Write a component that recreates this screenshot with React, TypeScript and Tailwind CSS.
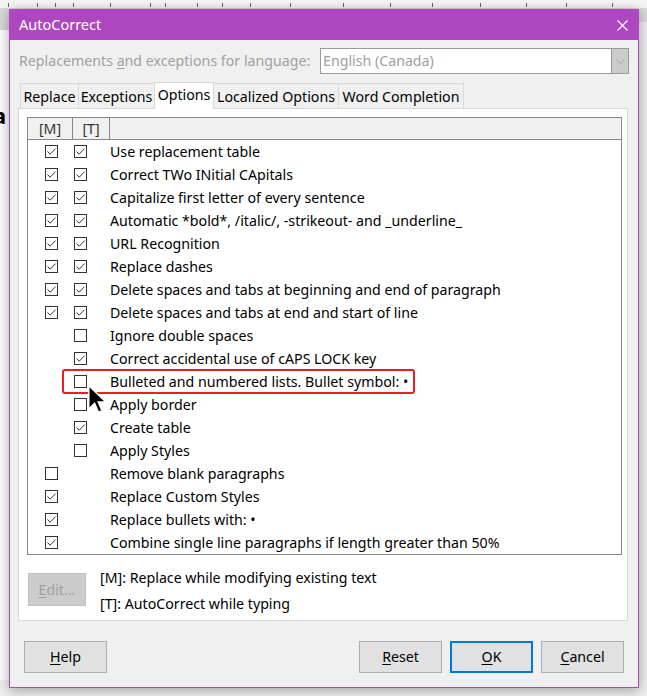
import React from "react";

type C = "c" | "u" | null;

const rows: [string, C, C][] = [
  ["Use replacement table", "c", "c"],
  ["Correct TWo INitial CApitals", "c", "c"],
  ["Capitalize first letter of every sentence", "c", "c"],
  ["Automatic *bold*, /italic/, -strikeout- and _underline_", "c", "c"],
  ["URL Recognition", "c", "c"],
  ["Replace dashes", "c", "c"],
  ["Delete spaces and tabs at beginning and end of paragraph", "c", "c"],
  ["Delete spaces and tabs at end and start of line", "c", "c"],
  ["Ignore double spaces", null, "u"],
  ["Correct accidental use of cAPS LOCK key", null, "c"],
  ["Bulleted and numbered lists. Bullet symbol: •", null, "u"],
  ["Apply border", null, "u"],
  ["Create table", null, "c"],
  ["Apply Styles", null, "u"],
  ["Remove blank paragraphs", "u", null],
  ["Replace Custom Styles", "c", null],
  ["Replace bullets with: •", "c", null],
  ["Combine single line paragraphs if length greater than 50%", "c", null],
];

function Box({ state }: { state: C }) {
  if (!state) return null;
  return (
    <span className="w-[13px] h-[13px] border border-[#333333] bg-white flex items-center justify-center">
      {state === "c" && (
        <svg width="11" height="11" viewBox="0 0 11 11">
          <path d="M1.5 5.5 L4.2 8.2 L9.6 2.6" fill="none" stroke="#333333" strokeWidth="1" />
        </svg>
      )}
    </span>
  );
}

function Btn({ children, primary }: { children: React.ReactNode; primary?: boolean }) {
  return (
    <div
      className={
        primary
          ? "w-[83px] h-[32px] border-2 border-[#0078d7] bg-[#e1e1e1] flex items-center justify-center text-black"
          : "w-[83px] h-[32px] border border-[#adadad] bg-[#e1e1e1] flex items-center justify-center text-black"
      }
    >
      {children}
    </div>
  );
}

const tabs = [
  { label: "Replace", w: "w-[59px]" },
  { label: "Exceptions", w: "w-[77px]" },
  { label: "Options", w: "w-[60px]", sel: true },
  { label: "Localized Options", w: "w-[126px]" },
  { label: "Word Completion", w: "w-[126px]" },
];

const ticks = [8, 37, 55, 73, 110, 150, 165, 197, 222, 250, 290, 343, 390, 432, 480, 526, 566, 612];

export default function App() {
  return (
    <div className="relative w-[647px] h-[696px] overflow-hidden bg-white font-['Noto_Sans','DejaVu_Sans',sans-serif] text-[14.2px] text-black">
      {/* background window */}
      <div className="absolute left-0 top-0 w-[647px] h-[8px] bg-[#f7f7f7]">
        {ticks.map((x, i) => (
          <span
            key={i}
            className="absolute top-[3px] w-[1px] h-[4px] bg-[#666666]"
            style={{ left: x }}
          />
        ))}
      </div>
      <div className="absolute left-0 top-[8px] w-[647px] h-[22px] bg-[#d9d9d9]" />
      <div className="absolute left-[639px] top-[22px] w-[8px] h-[674px] bg-[#efefef]" />
      <div className="absolute left-0 top-[680px] w-[647px] h-[16px] bg-[#efefef]" />
      <span className="absolute left-[-7px] top-[104px] text-[22px] font-bold leading-none">a</span>

      {/* dialog */}
      <div className="relative z-10 ml-[9px] mt-[9px] w-[630px] h-[679px] border border-[#ae47bf] bg-[#f0f0f0] flex flex-col shadow-[0_2px_12px_rgba(0,0,0,0.35)]">
        <div className="h-[30px] bg-[#ae47bf] flex items-center justify-between pl-[9px] pr-[10px] text-white text-[14.5px]">
          <span>AutoCorrect</span>
          <svg width="11" height="11" viewBox="0 0 11 11">
            <path d="M0.5 0.5 L10.5 10.5 M10.5 0.5 L0.5 10.5" stroke="white" strokeWidth="1.2" />
          </svg>
        </div>

        <div className="mt-[8px] h-[26px] flex items-center pl-[9px] pr-[9px]">
          <span className="flex-1 text-[#a0a0a0]">
            Replacements <span className="underline underline-offset-2">a</span>nd exceptions for language:
          </span>
          <div className="w-[309px] h-[26px] border border-[#9a9a9a] bg-white flex items-stretch">
            <span className="flex-1 pl-[2px] flex items-center text-[#a0a0a0]">English (Canada)</span>
            <span className="w-[17px] bg-[#cccccc] border-l border-[#9a9a9a] flex items-center justify-center">
              <svg width="9" height="5" viewBox="0 0 9 5">
                <path d="M0.5 0.5 L4.5 4.5 L8.5 0.5" fill="none" stroke="#a6a6a6" strokeWidth="1" />
              </svg>
            </span>
          </div>
        </div>

        <div className="mt-[8px] pl-[8px] pr-[10px] flex flex-col">
          <div className="h-[26px] pl-[2px] flex items-end">
            {tabs.map((t, i) => (
              <div
                key={t.label}
                className={
                  (t.sel
                    ? "h-[27px] -mb-[1px] relative z-10 bg-white pb-[3px] "
                    : "h-[25px] bg-[#f0f0f0] pt-[1px] ") +
                  t.w +
                  (i > 0 ? " -ml-[1px]" : "") +
                  " border-t border-l border-r border-[#d9d9d9] flex items-center justify-center whitespace-nowrap"
                }
              >
                {t.label}
              </div>
            ))}
          </div>

          <div className="h-[513px] border border-[#d9d9d9] bg-white pt-[8px] pl-[8px] pr-[5px] pb-[3px] flex flex-col">
            <div className="h-[438px] border border-[#828790] bg-white flex flex-col">
              <div className="h-[22px] flex border-b border-[#828790] bg-[#f0f0f0] text-[#333333]">
                <div className="w-[45px] border-r border-[#828790] flex items-center justify-center">[M]</div>
                <div className="w-[37px] border-r border-[#828790] flex items-center justify-center">[T]</div>
                <div className="flex-1" />
              </div>
              {rows.map(([label, m, t]) => (
                <div key={label} className="h-[23px] flex items-center">
                  <div className="w-[17px]" />
                  <div className="w-[29px] flex">
                    <Box state={m} />
                  </div>
                  <div className="w-[36px] flex">
                    <Box state={t} />
                  </div>
                  <span className="whitespace-nowrap">{label}</span>
                </div>
              ))}
            </div>

            <div className="mt-[10px] flex items-start">
              <div className="mt-[8px] ml-[1px] w-[58px] h-[33px] bg-[#cccccc] border border-[#bfbfbf] flex items-center justify-center text-[#a0a0a0]">
                <span>
                  <span className="underline underline-offset-2">E</span>dit...
                </span>
              </div>
              <div className="ml-[14px] flex flex-col leading-[26px]">
                <span>[M]: Replace while modifying existing text</span>
                <span>[T]: AutoCorrect while typing</span>
              </div>
            </div>
          </div>
        </div>

        <div className="mt-[20px] px-[14px] flex justify-between">
          <Btn>
            <span className="underline underline-offset-2">H</span>elp
          </Btn>
          <div className="flex gap-[8px]">
            <Btn>
              <span className="underline underline-offset-2">R</span>eset
            </Btn>
            <Btn primary>
              <span className="underline underline-offset-2">O</span>K
            </Btn>
            <Btn>
              <span className="underline underline-offset-2">C</span>ancel
            </Btn>
          </div>
        </div>
      </div>

      {/* highlight */}
      <div className="absolute z-20 left-[62px] top-[369px] w-[353px] h-[25px] border-2 border-[#ee1c25] rounded-[3px]" />

      {/* cursor */}
      <svg
        className="absolute z-30 left-[88px] top-[385px]"
        width="19"
        height="29"
        viewBox="0 0 13 20"
      >
        <path
          d="M0.5 0.5 L0.5 16.5 L4.5 12.6 L7.2 18.8 L9.6 17.8 L7 11.7 L12.3 11.7 Z"
          fill="black"
          stroke="white"
          strokeWidth="1"
          strokeLinejoin="miter"
        />
      </svg>
    </div>
  );
}
